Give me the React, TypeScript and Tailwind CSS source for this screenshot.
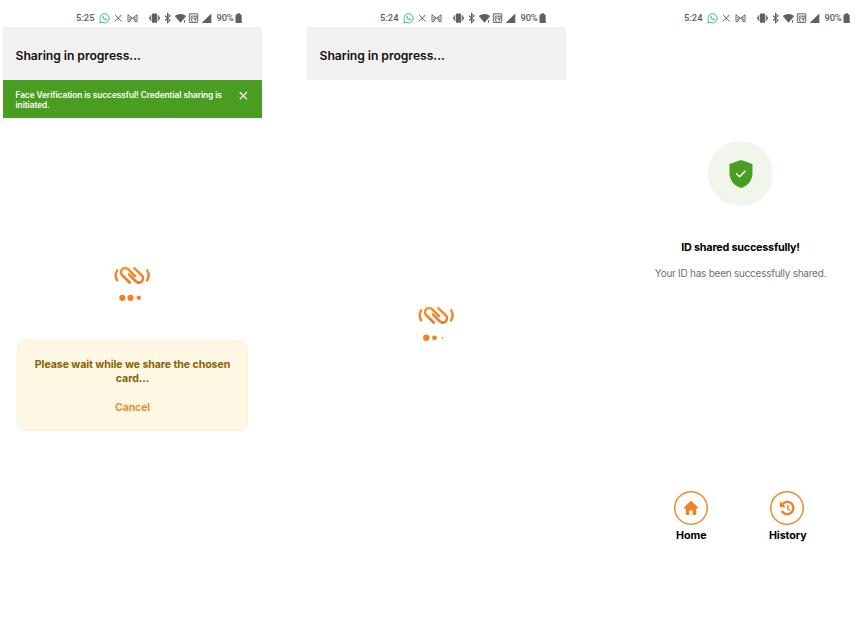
import React from "react";

function StatusBar({ time }: { time: string }) {
  return (
    <div className="flex h-[27px] shrink-0 items-center pl-[73px] pt-[9px] font-['Roboto',sans-serif] text-[#5c5c5c]">
      <span className="-mt-px w-[22px] text-[9.4px] font-medium leading-[12px]">{time}</span>
      <div className="flex gap-px">
        <svg width="13" height="13" viewBox="0 0 13 13" fill="none" stroke="#3bbd98" strokeWidth="1">
          <path d="M1.8 11 2.5 8.600A4.600 4.600 0 1 1 4.200 10.300Z" strokeLinejoin="round" />
          <path d="M4.700 4C3.800 5.600 6.400 8.600 8.300 8L8.600 7.200 7.300 6.600 6.700 7.100C6.100 6.800 5.700 6.300 5.400 5.800L5.800 5.300 5.300 4Z" fill="#3bbd98" strokeWidth="0.3" />
        </svg>
        <svg width="13" height="13" viewBox="0 0 13 13" fill="none" stroke="#606060" strokeWidth="1">
          <path d="M3 2.900 9.600 9.500M9.600 2.900 3 9.500" />
        </svg>
        <svg width="13" height="13" viewBox="0 0 13 13" fill="none" stroke="#686868" strokeWidth="1">
          <path d="M2 9.700V2.700L6.500 6.200 11 2.700V9.700H9V5M2 9.700H4V5M4 8 6.500 6.200 9 8" />
        </svg>
      </div>
      <div className="ml-[9px] flex">
        <svg width="13" height="13" viewBox="0 0 13 13" fill="#606060">
          <rect x="4" y="1.600" width="5" height="9.200" rx=".6" />
          <path d="M2.200 3.300h1.100v5.800H2.200zM9.700 3.300h1.100v5.800H9.700zM1 4.800h.8v2.800H1zM11.200 4.800h.8v2.800h-.8z" />
        </svg>
        <svg width="13" height="13" viewBox="0 0 13 13" fill="none" stroke="#606060" strokeWidth="1.100">
          <path d="M4 3.700 9 8.300 6.500 10.700V1.600L9 4 4 8.500" />
        </svg>
        <svg width="13" height="13" viewBox="0 0 13 13" fill="#606060">
          <path d="M.8 4C4.200 1.200 8.800 1.200 12.200 4L6.500 10.800Z" />
          <path d="M10 8h.9v2.800H10z" />
        </svg>
        <svg width="13" height="13" viewBox="0 0 13 13" fill="none" stroke="#606060" strokeWidth="1">
          <rect x="2.300" y="1.800" width="8.400" height="8.600" rx=".5" />
          <path d="M3.800 3.400 4.800 5.200 5.800 3.400M7 5.200V3.600L8.200 4.500 9.400 3.600V5.200M3 6.100H10M4.500 7V9H6.200M7 7.300H9.400M8.200 7.300V9.500" strokeWidth=".9" />
        </svg>
        <svg width="13" height="13" viewBox="0 0 13 13" fill="#606060">
          <path d="M11.300 1.500V10.900H1.600Z" />
        </svg>
      </div>
      <span className="-mt-px ml-[3.500px] w-[18.500px] text-[9.400px] font-medium leading-[12px] tracking-[-0.200px]">90%</span>
      <svg width="8" height="13" viewBox="0 0 8 13" fill="#606060">
        <path d="M2.300 1.300h2.600v1.100h1.300q.5 0 .5.500v7.500q0 .5-.5.500H1q-.5 0-.5-.5v-7.500Q.5 2.400 1 2.400h1.300Z" />
      </svg>
    </div>
  );
}

function Loader({ dots }: { dots: number[] }) {
  return (
    <svg width="36" height="38" viewBox="0 0 36 38" className="ml-[111px] block shrink-0">
      <defs>
        <linearGradient id="flame" gradientUnits="userSpaceOnUse" x1="0" y1="0" x2="0" y2="21">
          <stop offset="0" stopColor="#f4993a" />
          <stop offset="1" stopColor="#e97420" />
        </linearGradient>
      </defs>
      <g fill="none" stroke="url(#flame)" strokeWidth="2.600" strokeLinecap="round" transform="translate(.5 -.2)">
        <path d="M2.700 5.500Q-.5 10.500 2.700 15.500M32.600 5.500Q35.800 10.500 32.600 15.500" strokeWidth="2.400" />
        <path d="M15.200 17.700 7.800 10.500A4.150 4.150 0 0 1 13.700 4.400L20.600 11.300" />
        <path d="M19.800 3.300 27.200 10.500A4.150 4.150 0 0 1 21.300 16.600L14.400 9.700" />
      </g>
      {dots.map((r, i) => (
        <circle key={i} cx={8.3 + i * 8.2} cy="32.8" r={r} fill="#ef8126" />
      ))}
    </svg>
  );
}

function Header() {
  return (
    <header className="flex h-[53px] shrink-0 items-center bg-[#f1f1f1] pl-[12.500px] pt-[6px] text-[12.200px] font-semibold tracking-[-0.050px] text-[#111]">
      Sharing in progress...
    </header>
  );
}

function Action({ label, children }: { label: string; children: React.ReactNode }) {
  return (
    <button className="flex w-[60px] flex-col items-center text-[10.700px] font-bold leading-[14px] tracking-[-0.080px] text-black">
      <span className="mb-[4px] flex size-[34px] items-center justify-center rounded-full shadow-[inset_0_0_0_1.500px_#ed8a34]">
        {children}
      </span>
      <span className="pl-px">{label}</span>
    </button>
  );
}

export default function App() {
  return (
    <main className="flex h-[621px] w-[864px] gap-[45px] overflow-hidden bg-white pl-[3px] font-['Inter',sans-serif]">
      <section className="flex w-[259px] shrink-0 flex-col">
        <StatusBar time="5:25" />
        <Header />
        <div className="flex h-[38px] shrink-0 items-start justify-between bg-[#499d20] pl-[12.500px] pr-[14.500px] pt-[9.500px] text-[8.300px] font-semibold leading-[10px] tracking-[-0.060px] text-white">
          <p className="w-[212px]">Face Verification is successful! Credential sharing is initiated.</p>
          <svg width="9" height="11" viewBox="0 0 9 11" stroke="white" strokeWidth="1.200" fill="none">
            <path d="M.7 2 8 9.300M8 2 .7 9.300" />
          </svg>
        </div>
        <div className="h-[147px] shrink-0" />
        <Loader dots={[3.1, 3.1, 2.2]} />
        <div className="mx-[14px] mt-[37px] flex h-[91px] shrink-0 flex-col items-center rounded-[8px] border border-[#fdefd3] bg-[#fdf7e3] pt-[17px] text-center text-[10.600px] font-bold leading-[13.500px] tracking-[-0.080px] text-[#8b6105]">
          <p className="w-[210px]">Please wait while we share the chosen card...</p>
          <button className="mt-[16px] font-semibold text-[#ed8128]">Cancel</button>
        </div>
      </section>

      <section className="flex w-[259px] shrink-0 flex-col">
        <StatusBar time="5:24" />
        <Header />
        <div className="h-[225px] shrink-0" />
        <Loader dots={[3.2, 2.4, 0.9]} />
      </section>

      <section className="flex w-[259px] shrink-0 flex-col items-center">
        <div className="w-full">
          <StatusBar time="5:24" />
        </div>
        <div className="mt-[114px] flex size-[65px] items-center justify-center rounded-full bg-[#f0f6ec]">
          <svg width="24" height="28" viewBox="0 0 24 28" fill="none">
            <path d="M12 0 23.500 4V13C23.500 20 19 26 12 28 5 26 .5 20 .5 13V4Z" fill="#499d20" />
            <path d="M7.300 13.500 10.600 16.700 16.500 10.800" stroke="white" strokeWidth="1.500" />
          </svg>
        </div>
        <h1 className="mt-[34.500px] text-[10.800px] font-bold leading-[14px] tracking-[-0.220px] text-black">ID shared successfully!</h1>
        <p className="mt-[11.500px] text-[10px] leading-[14px] tracking-[-0.250px] text-[#707070]">Your ID has been successfully shared.</p>
        <div className="mr-[3px] mt-[211px] flex gap-[36.500px]">
          <Action label="Home">
            <svg width="16" height="16" viewBox="0 0 16 16">
              <path d="M8 .8 15 7.300Q15.500 8.200 14.600 8.500H13.200V14Q13.200 15 12.200 15H9.700V10.500H6.300V15H3.800Q2.800 15 2.800 14V8.500H1.400Q.5 8.200 1 7.300Z" fill="#ee8228" />
            </svg>
          </Action>
          <Action label="History">
            <svg width="17" height="17" viewBox="0 0 16 16" fill="none" stroke="#ee8228" strokeWidth="2.200">
              <path d="M3 4.200A5.800 5.800 0 1 1 2.600 10.200" />
              <path d="M.8 1.200V6.800H6.500Z" fill="#ee8228" stroke="none" />
              <path d="M8.200 4.600V8.200L10.300 9.900" strokeWidth="1.400" />
            </svg>
          </Action>
        </div>
      </section>
    </main>
  );
}
